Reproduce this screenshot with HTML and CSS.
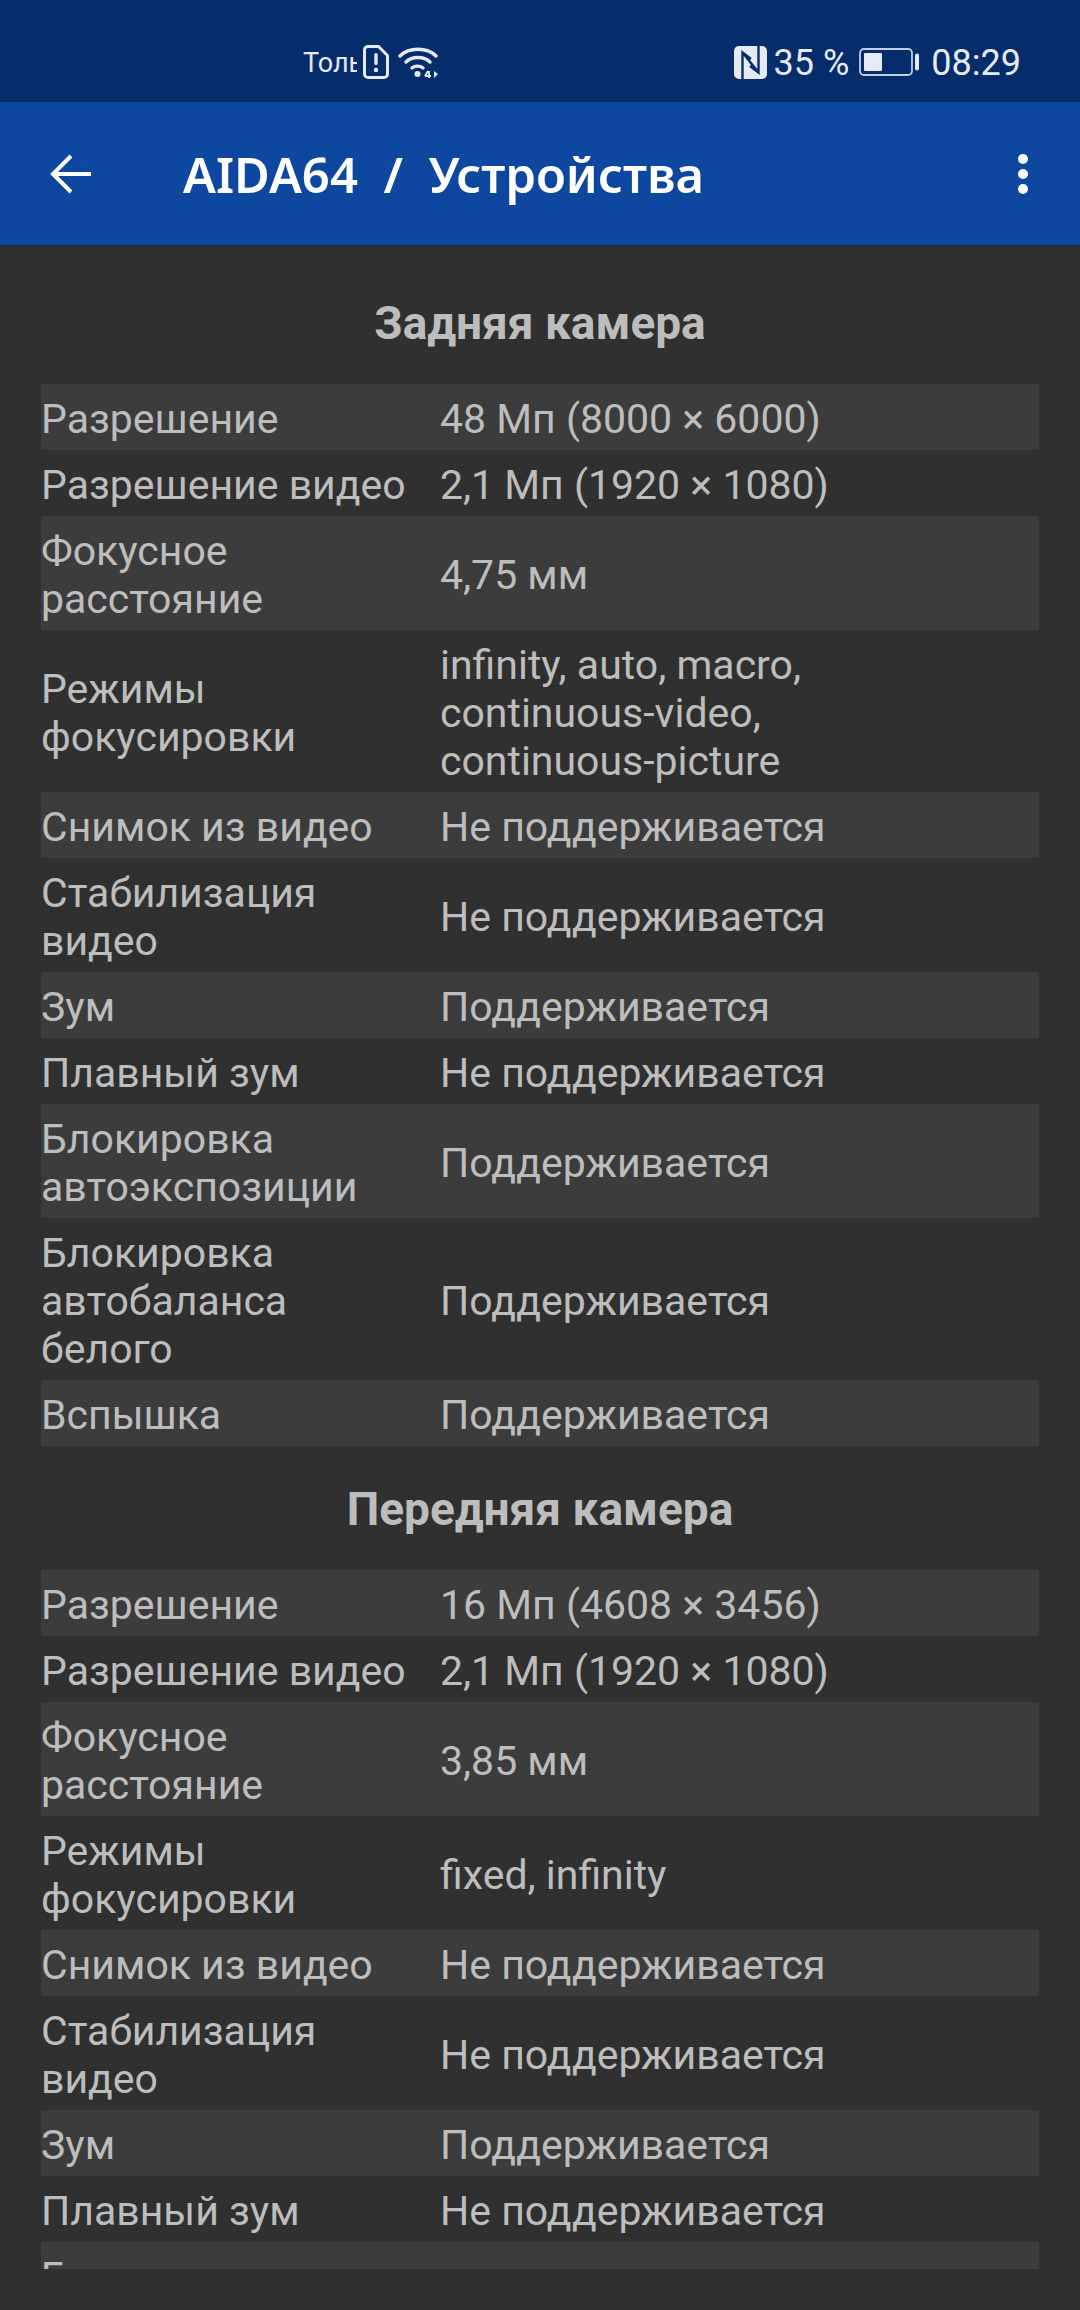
FILE: index.html
```html
<!DOCTYPE html>
<html lang="ru">
<head>
<meta charset="utf-8">
<title>AIDA64 / Устройства</title>
<link rel="stylesheet" href="styles.css">
</head>
<body>
<div class="screen">
  <header class="statusbar">
    <div class="status-left">
      <span class="carrier">Только экстренные</span>
      <svg class="sim" width="26" height="34" viewBox="0 0 26 34"><path d="M5 1.500h10.500L24.500 10.500V29a3.500 3.500 0 0 1-3.500 3.500H5A3.500 3.500 0 0 1 1.500 29V5A3.500 3.500 0 0 1 5 1.500z" fill="none" stroke="#e6eaf4" stroke-width="3"/><rect x="11.300" y="8" width="3.400" height="12" rx="1.500" fill="#e6eaf4"/><circle cx="13" cy="25" r="2.200" fill="#e6eaf4"/></svg>
      <svg class="wifi" width="40" height="32" viewBox="0 0 40 32"><g fill="none" stroke="#e6eaf4" stroke-width="3.400" stroke-linecap="round"><path d="M2 10C11 1 29 1 38 10"/><path d="M8 16C14 10 26 10 32 16"/><path d="M14 22C17 19.500 22 19.500 25 22"/></g><circle cx="19.500" cy="28" r="3" fill="#e6eaf4"/><path d="M31 25v7M27 30l3-5M27 30h6" fill="none" stroke="#e6eaf4" stroke-width="1.800"/><path d="M36 25v7l4-4z" fill="#e6eaf4"/></svg>
    </div>
    <div class="status-right">
      <svg class="nfc" width="33" height="33" viewBox="0 0 33 33"><rect width="33" height="33" rx="5" fill="#e6eaf4"/><path d="M8.500 33V6.500L17 13M24.500 0V26.500L16 20M8.500 6.500L24.500 26.500" fill="none" stroke="#052c6b" stroke-width="2.400"/></svg>
      <span class="percent">35 %</span>
      <svg class="battery" width="60" height="28" viewBox="0 0 60 28"><rect x="1" y="1" width="52" height="26" rx="4" fill="none" stroke="#c4cde2" stroke-width="1.800"/><rect x="5" y="5" width="18" height="18" rx="1" fill="#e6eaf4"/><rect x="56" y="5.500" width="4" height="17" rx="2" fill="#e6eaf4"/></svg>
      <span class="clock">08:29</span>
    </div>
  </header>
  <nav class="toolbar">
    <svg class="back" width="42" height="42" viewBox="0 0 42 42"><path d="M41 21H3M21 3L3 21l18 18" fill="none" stroke="#fff" stroke-width="4"/></svg>
    <h1 class="title">AIDA64&nbsp; /&nbsp; Устройства</h1>
    <div class="more"><i></i><i></i><i></i></div>
  </nav>
  <main class="content">
    <section class="group">
      <h2 class="group-title">Задняя камера</h2>
      <div class="table">
        <div class="row"><div class="key">Разрешение</div><div class="val">48 Мп (8000 × 6000)</div></div>
        <div class="row"><div class="key">Разрешение видео</div><div class="val">2,1 Мп (1920 × 1080)</div></div>
        <div class="row"><div class="key">Фокусное расстояние</div><div class="val">4,75 мм</div></div>
        <div class="row"><div class="key">Режимы фокусировки</div><div class="val">infinity, auto, macro,<br>continuous-video,<br>continuous-picture</div></div>
        <div class="row"><div class="key">Снимок из видео</div><div class="val">Не поддерживается</div></div>
        <div class="row"><div class="key">Стабилизация видео</div><div class="val">Не поддерживается</div></div>
        <div class="row"><div class="key">Зум</div><div class="val">Поддерживается</div></div>
        <div class="row"><div class="key">Плавный зум</div><div class="val">Не поддерживается</div></div>
        <div class="row"><div class="key">Блокировка автоэкспозиции</div><div class="val">Поддерживается</div></div>
        <div class="row"><div class="key">Блокировка автобаланса белого</div><div class="val">Поддерживается</div></div>
        <div class="row"><div class="key">Вспышка</div><div class="val">Поддерживается</div></div>
      </div>
    </section>
    <section class="group">
      <h2 class="group-title">Передняя камера</h2>
      <div class="table">
        <div class="row"><div class="key">Разрешение</div><div class="val">16 Мп (4608 × 3456)</div></div>
        <div class="row"><div class="key">Разрешение видео</div><div class="val">2,1 Мп (1920 × 1080)</div></div>
        <div class="row"><div class="key">Фокусное расстояние</div><div class="val">3,85 мм</div></div>
        <div class="row"><div class="key">Режимы фокусировки</div><div class="val">fixed, infinity</div></div>
        <div class="row"><div class="key">Снимок из видео</div><div class="val">Не поддерживается</div></div>
        <div class="row"><div class="key">Стабилизация видео</div><div class="val">Не поддерживается</div></div>
        <div class="row"><div class="key">Зум</div><div class="val">Поддерживается</div></div>
        <div class="row"><div class="key">Плавный зум</div><div class="val">Не поддерживается</div></div>
        <div class="row"><div class="key">Блокировка автоэкспозиции</div><div class="val">Поддерживается</div></div>
      </div>
    </section>
  </main>
</div>
</body>
</html>
```
FILE: styles.css
```css
* { box-sizing: border-box; }
html, body { margin: 0; padding: 0; background: #303030; }
body { font-family: Roboto, "Noto Sans", sans-serif; }
.screen { width: 1080px; height: 2310px; display: flex; flex-direction: column; overflow: hidden; background: #303030; }

.statusbar { height: 102px; flex: none; background: #052c6b; display: flex; align-items: flex-end; justify-content: space-between; padding: 0 59px 22px 303px; color: #e6eaf4; }
.status-left { display: flex; align-items: center; }
.carrier { width: 54px; overflow: hidden; white-space: nowrap; font-size: 27px; line-height: 34px; padding-top: 2px; margin-right: 6px; }
.sim { margin-right: 9px; }
.status-right { display: flex; align-items: center; }
.nfc { margin-right: 7px; }
.percent { font-size: 36px; line-height: 34px; padding-top: 2px; margin-right: 10px; }
.battery { margin-right: 12px; }
.clock { font-size: 36px; line-height: 34px; padding-top: 2px; }

.toolbar { height: 143px; flex: none; background: #0e47a0; display: flex; align-items: center; padding: 0 52px 0 50px; color: #fff; box-shadow: 0 1px 2px rgba(0,0,0,.25); position: relative; }
.back { flex: none; margin-right: 91px; }
.title { flex: 1; margin: 0; font-family: "Noto Sans", sans-serif; font-size: 49px; font-weight: 600; line-height: 60px; white-space: nowrap; }
.more { display: flex; flex-direction: column; gap: 5px; }
.more i { display: block; width: 10px; height: 10px; border-radius: 50%; background: #fff; }

.content { height: 2024px; flex: none; overflow: hidden; padding: 15px 41px 0; color: #bdbdbd; }
.group-title { height: 124px; margin: 0; text-align: center; font-size: 46px; font-weight: 700; line-height: 126px; color: #bdbdbd; }
.table { display: flex; flex-direction: column; }
.row { display: grid; grid-template-columns: 399px 1fr; align-items: center; padding: 11px 0 7px; font-size: 41px; line-height: 48px; }
.row:nth-child(odd) { background: #3c3c3c; }
.key { padding: 0 30px 0 0; }
.val { padding-right: 30px; }
```
